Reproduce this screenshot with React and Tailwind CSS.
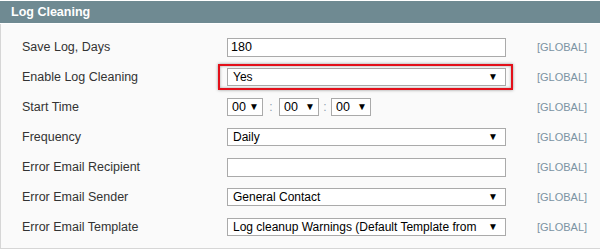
const rows = [
  { label: "Save Log, Days", kind: "input", value: "180" },
  { label: "Enable Log Cleaning", kind: "select", value: "Yes", highlight: true },
  { label: "Start Time", kind: "time" },
  { label: "Frequency", kind: "select", value: "Daily" },
  { label: "Error Email Recipient", kind: "input", value: "" },
  { label: "Error Email Sender", kind: "select", value: "General Contact" },
  { label: "Error Email Template", kind: "select", value: "Log cleanup Warnings (Default Template from" },
];

const Arrow = () => <span className="shrink-0 text-[10px] leading-none text-black">▼</span>;

const TextInput = ({ value }) => (
  <div className="w-[279px] h-[19px] border border-[#aaaaaa] bg-white flex items-center px-[3px] text-[12.5px] text-black">
    {value}
  </div>
);

const Select = ({ value }) => (
  <div className="w-[279px] h-[18px] border border-[#aaaaaa] bg-white flex items-center justify-between pl-[5px] pr-[7px] text-[12px] text-black">
    <span className="whitespace-nowrap">{value}</span>
    <Arrow />
  </div>
);

const TimeSelect = ({ w }) => (
  <div className={`${w} h-[18px] border border-[#aaaaaa] bg-white flex items-center justify-between pl-[4px] pr-[3px] text-[12.5px] text-black`}>
    <span>00</span>
    <Arrow />
  </div>
);

const Field = ({ row }) => {
  if (row.kind === "input") return <TextInput value={row.value} />;
  if (row.kind === "time")
    return (
      <div className="flex items-center w-[279px]">
        <TimeSelect w="w-[36px]" />
        <span className="w-[16px] text-center text-[12px] text-[#8fa3b0]">:</span>
        <TimeSelect w="w-[40px]" />
        <span className="w-[12px] text-center text-[12px] text-[#8fa3b0]">:</span>
        <TimeSelect w="w-[40px]" />
      </div>
    );
  if (row.highlight)
    return (
      <div className="relative">
        <Select value={row.value} />
        <div className="absolute -left-[9px] -right-[7px] -top-[4px] -bottom-[4px] border-2 border-[#e3101a] shadow-[0_0_3px_rgba(0,0,0,0.4),inset_0_0_3px_rgba(0,0,0,0.35)]" />
      </div>
    );
  return <Select value={row.value} />;
};

export default function App() {
  return (
    <div className="w-[600px] h-[252px] bg-white pt-[1px]" style={{ fontFamily: '"Liberation Sans", Arial, sans-serif' }}>
      <div className="h-[22px] bg-[#6f8a92] flex items-center pl-[11px] text-[12.5px] font-bold text-white">
        Log Cleaning
      </div>
      <div className="h-[1px] bg-white" />
      <div className="bg-[#fafafa] border-l border-b border-[#d6d6d6] pt-[8px] pb-[6px]">
        {rows.map((row) => (
          <div key={row.label} className="h-[30px] flex items-center">
            <div className="w-[226px] pl-[21px] text-[12.5px] text-[#333333]">{row.label}</div>
            <Field row={row} />
            <div className="pl-[31px] text-[11px] text-[#7b93a3]">[GLOBAL]</div>
          </div>
        ))}
      </div>
    </div>
  );
}
